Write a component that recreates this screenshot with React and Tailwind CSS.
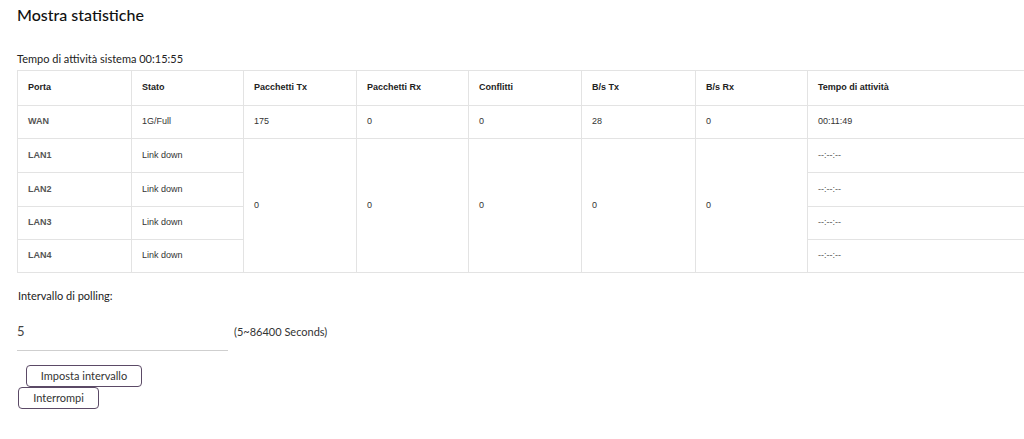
import React from "react";

const headers = [
  "Porta",
  "Stato",
  "Pacchetti Tx",
  "Pacchetti Rx",
  "Conflitti",
  "B/s Tx",
  "B/s Rx",
  "Tempo di attività",
];

const lanRows = [
  { port: "LAN1", h: "h-[34px]" },
  { port: "LAN2", h: "h-[34px]" },
  { port: "LAN3", h: "h-[33px]" },
  { port: "LAN4", h: "h-[33px]" },
];

export default function App() {
  const cell = "border border-[#e3e3e3] px-[10px] py-0 text-left align-middle";

  return (
    <div
      className="w-[1024px] h-[439px] overflow-hidden bg-white text-[#222]"
      style={{ fontFamily: "Lato, 'Noto Sans', sans-serif" }}
    >
      <div className="pl-[17px] pt-[5px]">
        <h1 className="text-[16px] leading-[20px] font-medium text-[#111]">
          Mostra statistiche
        </h1>

        <p className="mt-[27px] text-[11px] leading-[14px] text-[#222]">
          Tempo di attività sistema 00:15:55
        </p>

        <table
          className="mt-[4px] w-[1120px] table-fixed border-collapse text-[9px] text-[#333]"
          style={{ fontFamily: "'Liberation Sans', Arial, sans-serif" }}
        >
          <colgroup>
            <col className="w-[114px]" />
            <col className="w-[112px]" />
            <col className="w-[113px]" />
            <col className="w-[112px]" />
            <col className="w-[113px]" />
            <col className="w-[114px]" />
            <col className="w-[112px]" />
            <col />
          </colgroup>
          <thead>
            <tr className="h-[35px]">
              {headers.map((h) => (
                <th key={h} className={`${cell} font-bold text-[#222]`}>
                  {h}
                </th>
              ))}
            </tr>
          </thead>
          <tbody>
            <tr className="h-[33px]">
              <td className={`${cell} font-bold text-[#555]`}>WAN</td>
              <td className={cell}>1G/Full</td>
              <td className={cell}>175</td>
              <td className={cell}>0</td>
              <td className={cell}>0</td>
              <td className={cell}>28</td>
              <td className={cell}>0</td>
              <td className={cell}>00:11:49</td>
            </tr>
            {lanRows.map((r, i) => (
              <tr key={r.port} className={r.h}>
                <td className={`${cell} font-bold text-[#555]`}>{r.port}</td>
                <td className={cell}>Link down</td>
                {i === 0 && (
                  <>
                    <td rowSpan={4} className={cell}>0</td>
                    <td rowSpan={4} className={cell}>0</td>
                    <td rowSpan={4} className={cell}>0</td>
                    <td rowSpan={4} className={cell}>0</td>
                    <td rowSpan={4} className={cell}>0</td>
                  </>
                )}
                <td className={`${cell} text-[#555]`}>--:--:--</td>
              </tr>
            ))}
          </tbody>
        </table>

        <p className="mt-[16px] pl-[1px] text-[11px] leading-[14px] text-[#222]">
          Intervallo di polling:
        </p>

        <div className="mt-[20px] flex items-start">
          <div className="w-[211px] border-b border-[#cfcfcf] pb-[11px] text-[13px] leading-[16px] text-[#444]">
            5
          </div>
          <span className="ml-[6px] mt-[2px] text-[11px] leading-[14px] text-[#333]">
            (5~86400 Seconds)
          </span>
        </div>

        <div className="mt-[14px] flex flex-col items-start">
          <button className="ml-[9px] h-[22px] w-[116px] rounded-[4px] border border-[#5b4a66] bg-white text-[11px] text-[#333]">
            Imposta intervallo
          </button>
          <button className="ml-[1px] h-[22px] w-[81px] rounded-[4px] border border-[#5b4a66] bg-white text-[11px] text-[#333]">
            Interrompi
          </button>
        </div>
      </div>
    </div>
  );
}
